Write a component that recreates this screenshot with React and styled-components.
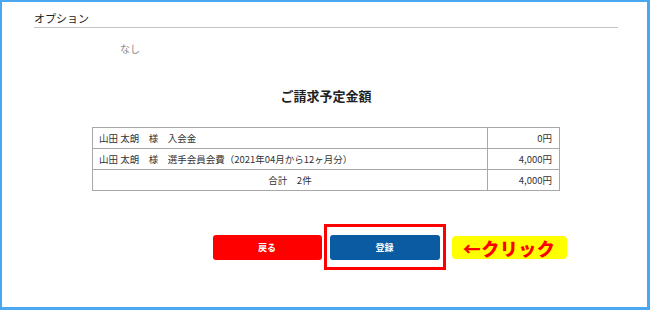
import React from "react";
import styled, { createGlobalStyle } from "styled-components";

const GlobalStyle = createGlobalStyle`
  html, body {
    margin: 0;
    padding: 0;
    background: #ffffff;
  }
  body {
    font-family: "Noto Sans CJK JP", "Noto Sans", sans-serif;
    color: #333;
  }
`;

const rows = [
  { label: "山田 太朗　様　入会金", amount: "0円" },
  { label: "山田 太朗　様　選手会員会費（2021年04月から12ヶ月分）", amount: "4,000円" },
];

const App = () => {
  return (
    <>
      <GlobalStyle />
      <Frame>
        <SectionHeader>オプション</SectionHeader>
        <OptionValue>なし</OptionValue>

        <Title>ご請求予定金額</Title>

        <BillTable>
          <tbody>
            {rows.map((row) => (
              <tr key={row.label}>
                <LabelCell>{row.label}</LabelCell>
                <AmountCell>{row.amount}</AmountCell>
              </tr>
            ))}
            <tr>
              <LabelCell $center>合計　2件</LabelCell>
              <AmountCell>4,000円</AmountCell>
            </tr>
          </tbody>
        </BillTable>

        <ActionRow>
          <span />
          <ButtonGroup>
            <Button $variant="back">戻る</Button>
            <Highlight>
              <Button $variant="submit">登録</Button>
            </Highlight>
          </ButtonGroup>
          <ClickNote>←クリック</ClickNote>
        </ActionRow>
      </Frame>
    </>
  );
};

// Styled Components

const Frame = styled.div`
  box-sizing: border-box;
  width: 650px;
  height: 310px;
  border: solid #4aa8f0;
  border-width: 2px 3px 3px 2px;
  padding: 7px 29px 0 32px;
  overflow: hidden;
`;

const SectionHeader = styled.div`
  font-size: 11px;
  line-height: 16px;
  color: #222;
  padding: 1px 0 1px;
  border-bottom: 1px solid #c4c4c4;
`;

const OptionValue = styled.div`
  margin-top: 14px;
  padding-left: 86px;
  font-size: 10px;
  line-height: 14px;
  color: #888;
`;

const Title = styled.h2`
  margin: 31px 0 0;
  text-align: center;
  font-size: 13px;
  line-height: 18px;
  font-weight: bold;
  color: #222;
`;

const BillTable = styled.table`
  margin: 22px auto 0;
  width: 468px;
  border-collapse: collapse;
  font-size: 9.5px;
  color: #333;

  tr {
    height: 21px;
  }
`;

const LabelCell = styled.td`
  box-sizing: border-box;
  width: 395px;
  border: 1px solid #a8a8a8;
  padding: 0 6px;
  line-height: 12px;
  text-align: ${(p) => (p.$center ? "center" : "left")};
`;

const AmountCell = styled.td`
  border: 1px solid #a8a8a8;
  padding: 0 7px 0 0;
  line-height: 12px;
  text-align: right;
`;

const ActionRow = styled.div`
  display: grid;
  grid-template-columns: 1fr auto 1fr;
  align-items: center;
  margin-top: 44px;
`;

const ButtonGroup = styled.div`
  display: flex;
  gap: 8px;
`;

const Button = styled.button`
  box-sizing: border-box;
  width: ${(p) => (p.$variant === "back" ? "109px" : "110px")};
  height: 25px;
  border: none;
  border-radius: 3px;
  background: ${(p) => (p.$variant === "back" ? "#ff0000" : "#0a5ba2")};
  color: #ffffff;
  font-family: "Noto Sans CJK JP", sans-serif;
  font-size: 9px;
  font-weight: bold;
  padding: 0;
  cursor: pointer;
`;

const Highlight = styled.div`
  position: relative;
  display: flex;

  &::before {
    content: "";
    position: absolute;
    top: -11px;
    bottom: -10px;
    left: -6px;
    right: -6px;
    border: 3px solid #ff0000;
    pointer-events: none;
  }
`;

const ClickNote = styled.div`
  justify-self: start;
  margin-left: 12px;
  box-sizing: border-box;
  width: 115px;
  height: 23px;
  display: flex;
  align-items: center;
  justify-content: center;
  background: #ffff00;
  border-radius: 4px;
  color: #ff0000;
  font-size: 18px;
  font-weight: 900;
  line-height: 1;
  letter-spacing: 0.5px;
`;

export default App;
